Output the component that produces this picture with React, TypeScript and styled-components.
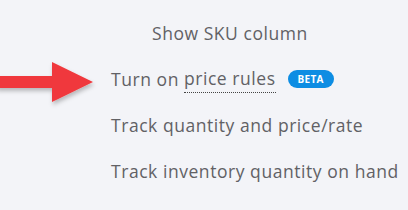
import React from "react";
import styled, { createGlobalStyle } from "styled-components";

const Global = createGlobalStyle`
  html, body { margin: 0; padding: 0; background: #f3f4f8; }
  body { width: 408px; height: 210px; overflow: hidden; }
`;

const Page = styled.div`
  position: relative;
  width: 408px;
  height: 210px;
  background: #f3f4f8;
  font-family: "Open Sans", sans-serif;
  color: #616165;
`;

const List = styled.div`
  display: flex;
  flex-direction: column;
  padding: 10px 0 0 111px;
`;

const Row = styled.div<{ $indent?: number }>`
  display: flex;
  align-items: center;
  height: 46px;
  padding-left: ${(p) => p.$indent ?? 0}px;
  font-size: 17.5px;
  letter-spacing: 0.55px;
  white-space: pre;
`;

const Dotted = styled.span`
  border-bottom: 1.5px dotted #444;
  padding-bottom: 2px;
`;

const Badge = styled.span`
  display: inline-flex;
  align-items: center;
  justify-content: center;
  margin-left: 12px;
  width: 46px;
  height: 18px;
  border-radius: 9px;
  background: #0d8de3;
  color: #fff;
  font-weight: 700;
  font-size: 10px;
  letter-spacing: 0.3px;
`;

const Arrow = styled.svg`
  position: absolute;
  left: 0;
  top: 58px;
  overflow: visible;
`;

export default function App() {
  return (
    <Page>
      <Global />
      <List>
        <Row $indent={41}>Show SKU column</Row>
        <Row>
          {"Turn on "}
          <Dotted>price rules</Dotted>
          <Badge>BETA</Badge>
        </Row>
        <Row>Track quantity and price/rate</Row>
        <Row>Track inventory quantity on hand</Row>
      </List>
      <Arrow width="100" height="50" viewBox="0 0 100 50">
        <defs>
          <filter id="sh" x="-20%" y="-20%" width="140%" height="160%">
            <feDropShadow dx="1" dy="3" stdDeviation="2" floodColor="#000" floodOpacity="0.25" />
          </filter>
        </defs>
        <path
          d="M -4 18 L 52 18 L 52 4 L 93 24 L 52 44 L 52 30 L -4 30 Z"
          fill="#f0393c"
          filter="url(#sh)"
        />
      </Arrow>
    </Page>
  );
}
